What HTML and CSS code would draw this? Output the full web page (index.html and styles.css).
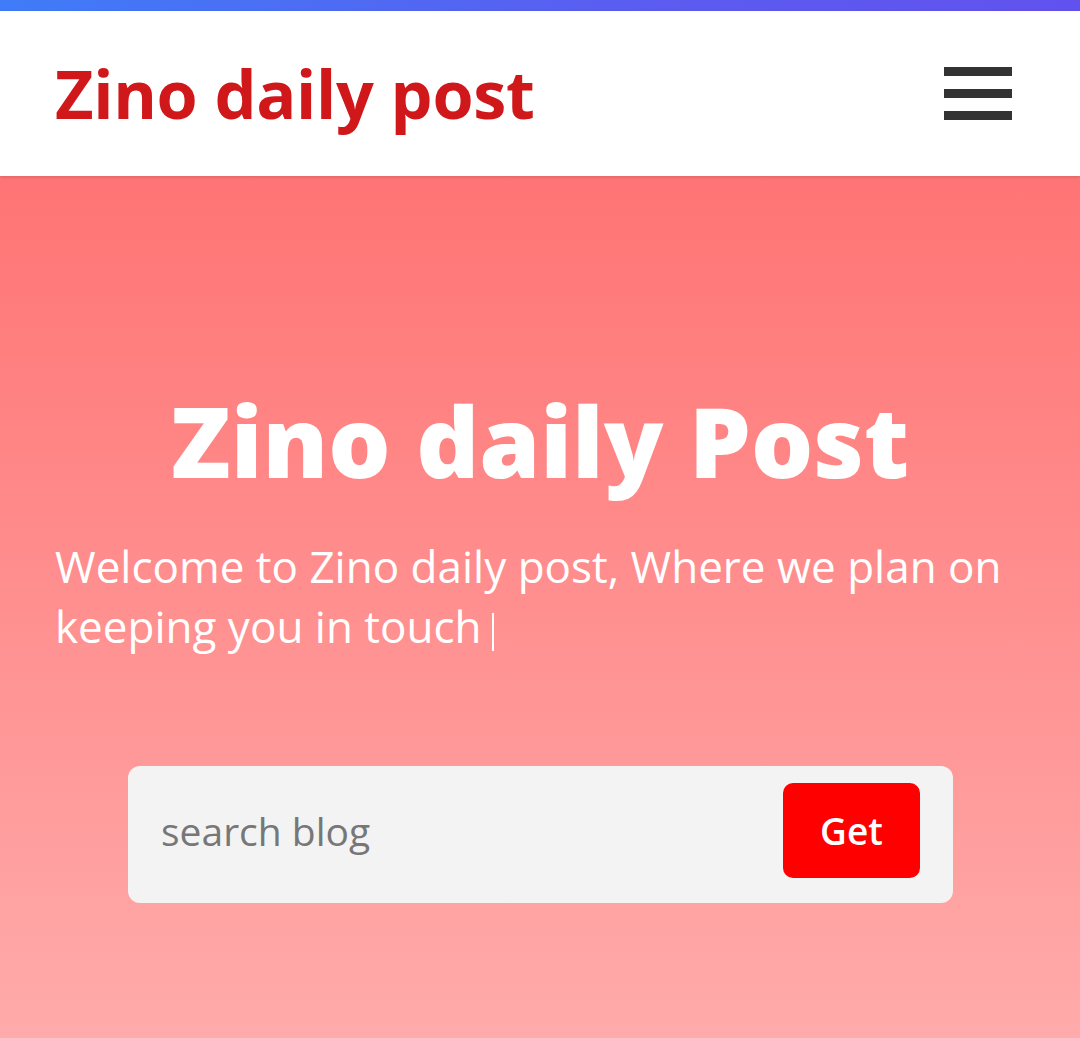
FILE: index.html
```html
<!DOCTYPE html>
<html lang="en">
<head>
<meta charset="utf-8">
<title>Zino daily post</title>
<link rel="stylesheet" href="styles.css">
</head>
<body>
<div class="topbar"></div>
<header class="header">
  <a class="logo" href="#">Zino daily post</a>
  <button class="menu" aria-label="Menu">
    <span class="bar"></span>
    <span class="bar"></span>
    <span class="bar"></span>
  </button>
</header>
<main class="hero">
  <h1 class="hero-title">Zino daily Post</h1>
  <p class="hero-text">Welcome to Zino daily post, Where we plan on keeping you in touch<span class="caret"></span></p>
  <form class="search">
    <input class="search-input" type="text" placeholder="search blog">
    <button class="search-btn" type="button">Get</button>
  </form>
</main>
</body>
</html>
```
FILE: styles.css
```css
* { box-sizing: border-box; }
html, body { margin: 0; padding: 0; }
body {
  font-family: "Open Sans", "Noto Sans", sans-serif;
  width: 1080px;
  height: 1038px;
  overflow: hidden;
  background: #ffadad;
}
.topbar {
  height: 11px;
  background: linear-gradient(90deg, #3f7cf8, #5b5cf0 60%, #6152ee);
}
.header {
  height: 165px;
  background: #fff;
  display: flex;
  align-items: center;
  justify-content: space-between;
  padding: 0 68px 0 55px;
  position: relative;
  z-index: 1;
  box-shadow: 0 1px 3px rgba(0,0,0,0.15);
}
.logo {
  color: #d0181b;
  font-weight: 700;
  font-size: 66.5px;
  letter-spacing: -0.3px;
  text-decoration: none;
  line-height: 1;
}
.menu {
  background: none;
  border: 0;
  padding: 0;
  display: flex;
  flex-direction: column;
  gap: 13px;
}
.bar {
  display: block;
  width: 68px;
  height: 9px;
  background: #333;
}
.hero {
  height: 862px;
  background: linear-gradient(180deg, #ff7474 0%, #ff8a8a 40%, #ffabab 100%);
  padding: 215px 55px 0;
  display: flex;
  flex-direction: column;
}
.hero-title {
  margin: 0;
  text-align: center;
  color: #fff;
  font-weight: 800;
  font-size: 98px;
  line-height: 1;
}
.hero-text {
  margin: 47px 0 0;
  color: #fff;
  font-weight: 400;
  font-size: 44px;
  line-height: 60px;
}
.caret {
  display: inline-block;
  width: 2px;
  height: 38px;
  margin-left: 10px;
  background: #fff;
  vertical-align: -8px;
}
.search {
  margin: 110px 0 0 73px;
  width: 825px;
  height: 137px;
  background: #f3f3f3;
  border-radius: 12px;
  display: flex;
  align-items: center;
  padding: 0 33px 8px;
}
.search-input {
  flex: 1;
  border: 0;
  background: transparent;
  font-family: "Open Sans", sans-serif;
  font-size: 39px;
  color: #333;
  outline: none;
  padding: 0;
}
.search-input::placeholder { color: #777; }
.search-btn {
  width: 137px;
  height: 95px;
  background: #ff0000;
  color: #fff;
  border: 0;
  border-radius: 10px;
  font-family: "Open Sans", sans-serif;
  font-weight: 600;
  font-size: 37px;
}
```
